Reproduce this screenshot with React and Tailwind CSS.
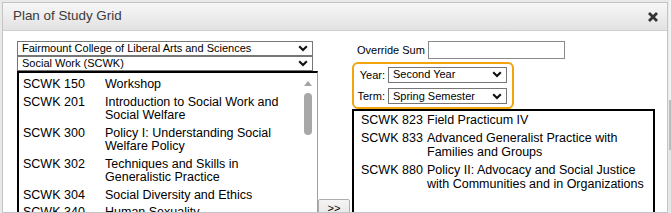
import React from "react";

const Chevron = () => (
  <svg width="10" height="7" viewBox="0 0 10 7" className="shrink-0">
    <path d="M1.2 1.2 L5 5 L8.8 1.2" stroke="#111" strokeWidth="2.1" fill="none" />
  </svg>
);

function FakeSelect({ text, className }) {
  return (
    <div className={"flex items-center justify-between border border-[#767676] bg-white pl-[4px] pr-[4px] text-[11px] leading-none text-black " + className}>
      <span className="whitespace-nowrap">{text}</span>
      <Chevron />
    </div>
  );
}

const leftRows = [
  ["SCWK 150", "Workshop"],
  ["SCWK 201", "Introduction to Social Work and Social Welfare"],
  ["SCWK 300", "Policy I: Understanding Social Welfare Policy"],
  ["SCWK 302", "Techniques and Skills in Generalistic Practice"],
  ["SCWK 304", "Social Diversity and Ethics"],
  ["SCWK 340", "Human Sexuality"],
];

const rightRows = [
  ["SCWK 823", "Field Practicum IV"],
  ["SCWK 833", "Advanced Generalist Practice with Families and Groups"],
  ["SCWK 880", "Policy II: Advocacy and Social Justice with Communities and in Organizations"],
];

export default function App() {
  return (
    <div
      className="relative h-[213px] w-[671px] overflow-hidden bg-[#e9e9e9]"
      style={{ fontFamily: '"Liberation Sans", Arial, sans-serif' }}
    >
      <div className="flex h-full">
        <div className="ml-[2px] mt-[2px] flex min-h-0 w-[666px] flex-col border border-[#c4c4c4] bg-white">
          {/* Title bar */}
          <div className="flex h-[28px] shrink-0 items-center justify-between border-b border-[#cfcfcf] bg-gradient-to-b from-[#f7f7f7] to-[#e2e2e2] pl-[10px] pr-[8px]">
            <span className="text-[13.4px] text-[#3a3a3a]">Plan of Study Grid</span>
            <svg width="12" height="12" viewBox="0 0 12 12">
              <path d="M2 2 L10 10 M10 2 L2 10" stroke="#333" strokeWidth="2.8" strokeLinecap="butt" />
            </svg>
          </div>
          {/* Body */}
          <div className="flex min-h-0 flex-1 overflow-hidden pl-[14px] pt-[10px]">
            {/* Left column */}
            <div className="flex min-h-0 w-[301px] flex-col">
              <FakeSelect text="Fairmount College of Liberal Arts and Sciences" className="h-[15px] w-[296px] shrink-0" />
              <FakeSelect text="Social Work (SCWK)" className="h-[15px] w-[296px] shrink-0" />
              <div className="relative min-h-0 flex-1 overflow-hidden border-l-2 border-t-2 border-r border-l-black border-t-black border-r-[#a0a0a0]">
                <div className="flex flex-col gap-[4.3px] pl-[4px] pt-[5.4px] text-[12.5px] leading-[13.3px] text-black">
                  {leftRows.map(([code, title]) => (
                    <div key={code} className="flex">
                      <span className="w-[82px] shrink-0">{code}</span>
                      <span className="w-[190px]">{title}</span>
                    </div>
                  ))}
                </div>
                {/* scrollbar */}
                <div className="absolute right-[4px] top-[8px] flex w-[10px] flex-col items-center">
                  <svg width="8" height="5" viewBox="0 0 8 5">
                    <path d="M0 5 L4 0 L8 5 Z" fill="#a3a3a3" />
                  </svg>
                  <div className="mt-[7px] h-[42px] w-[8px] rounded-[4px] bg-[#a8a8a8]" />
                </div>
              </div>
            </div>
            {/* Button column */}
            <div className="flex w-[34px] flex-col justify-end">
              <div className="mb-[-8px] flex h-[21px] w-[32px] shrink-0 items-start justify-center rounded-t-[2px] border border-[#adadad] bg-gradient-to-b from-[#f4f4f4] to-[#e4e4e4] pt-[3px] text-[11px] leading-none text-black">
                &gt;&gt;
              </div>
            </div>
            {/* Right column */}
            <div className="flex min-h-0 w-[303px] flex-col">
              <div className="flex h-[18px] shrink-0 items-center pl-[5px] text-[11px] text-black">
                <span className="mr-[3px]">Override Sum</span>
                <div className="h-[18px] w-[137px] border border-[#8a8a8a] bg-white" />
              </div>
              <div className="mt-[3px] flex h-[47px] w-[162px] shrink-0 flex-col justify-center gap-[5px] rounded-[6px] border-2 border-[#f2a40c] pl-[3px]">
                <div className="flex items-center text-[11px] text-black">
                  <span className="w-[31px] pr-[3px] text-right">Year:</span>
                  <FakeSelect text="Second Year" className="h-[16px] w-[119px]" />
                </div>
                <div className="flex items-center text-[11px] text-black">
                  <span className="w-[31px] pr-[3px] text-right">Term:</span>
                  <FakeSelect text="Spring Semester" className="h-[16px] w-[119px]" />
                </div>
              </div>
              <div className="min-h-0 flex-1 overflow-hidden border-2 border-b-0 border-black">
                <div className="flex flex-col gap-[4px] pl-[7px] pt-[2px] text-[12.5px] leading-[14px] text-black">
                  {rightRows.map(([code, title]) => (
                    <div key={code} className="flex">
                      <span className="w-[66px] shrink-0">{code}</span>
                      <span className="w-[222px]">{title}</span>
                    </div>
                  ))}
                </div>
              </div>
            </div>
          </div>
        </div>
        <div className="ml-[1px] flex w-[2px] flex-col">
          <div className="h-[100px] bg-[#f3f3f3]" />
          <div className="h-[50px] bg-[#bdbdbd]" />
          <div className="flex-1 bg-[#e6e6e6]" />
        </div>
      </div>
    </div>
  );
}
